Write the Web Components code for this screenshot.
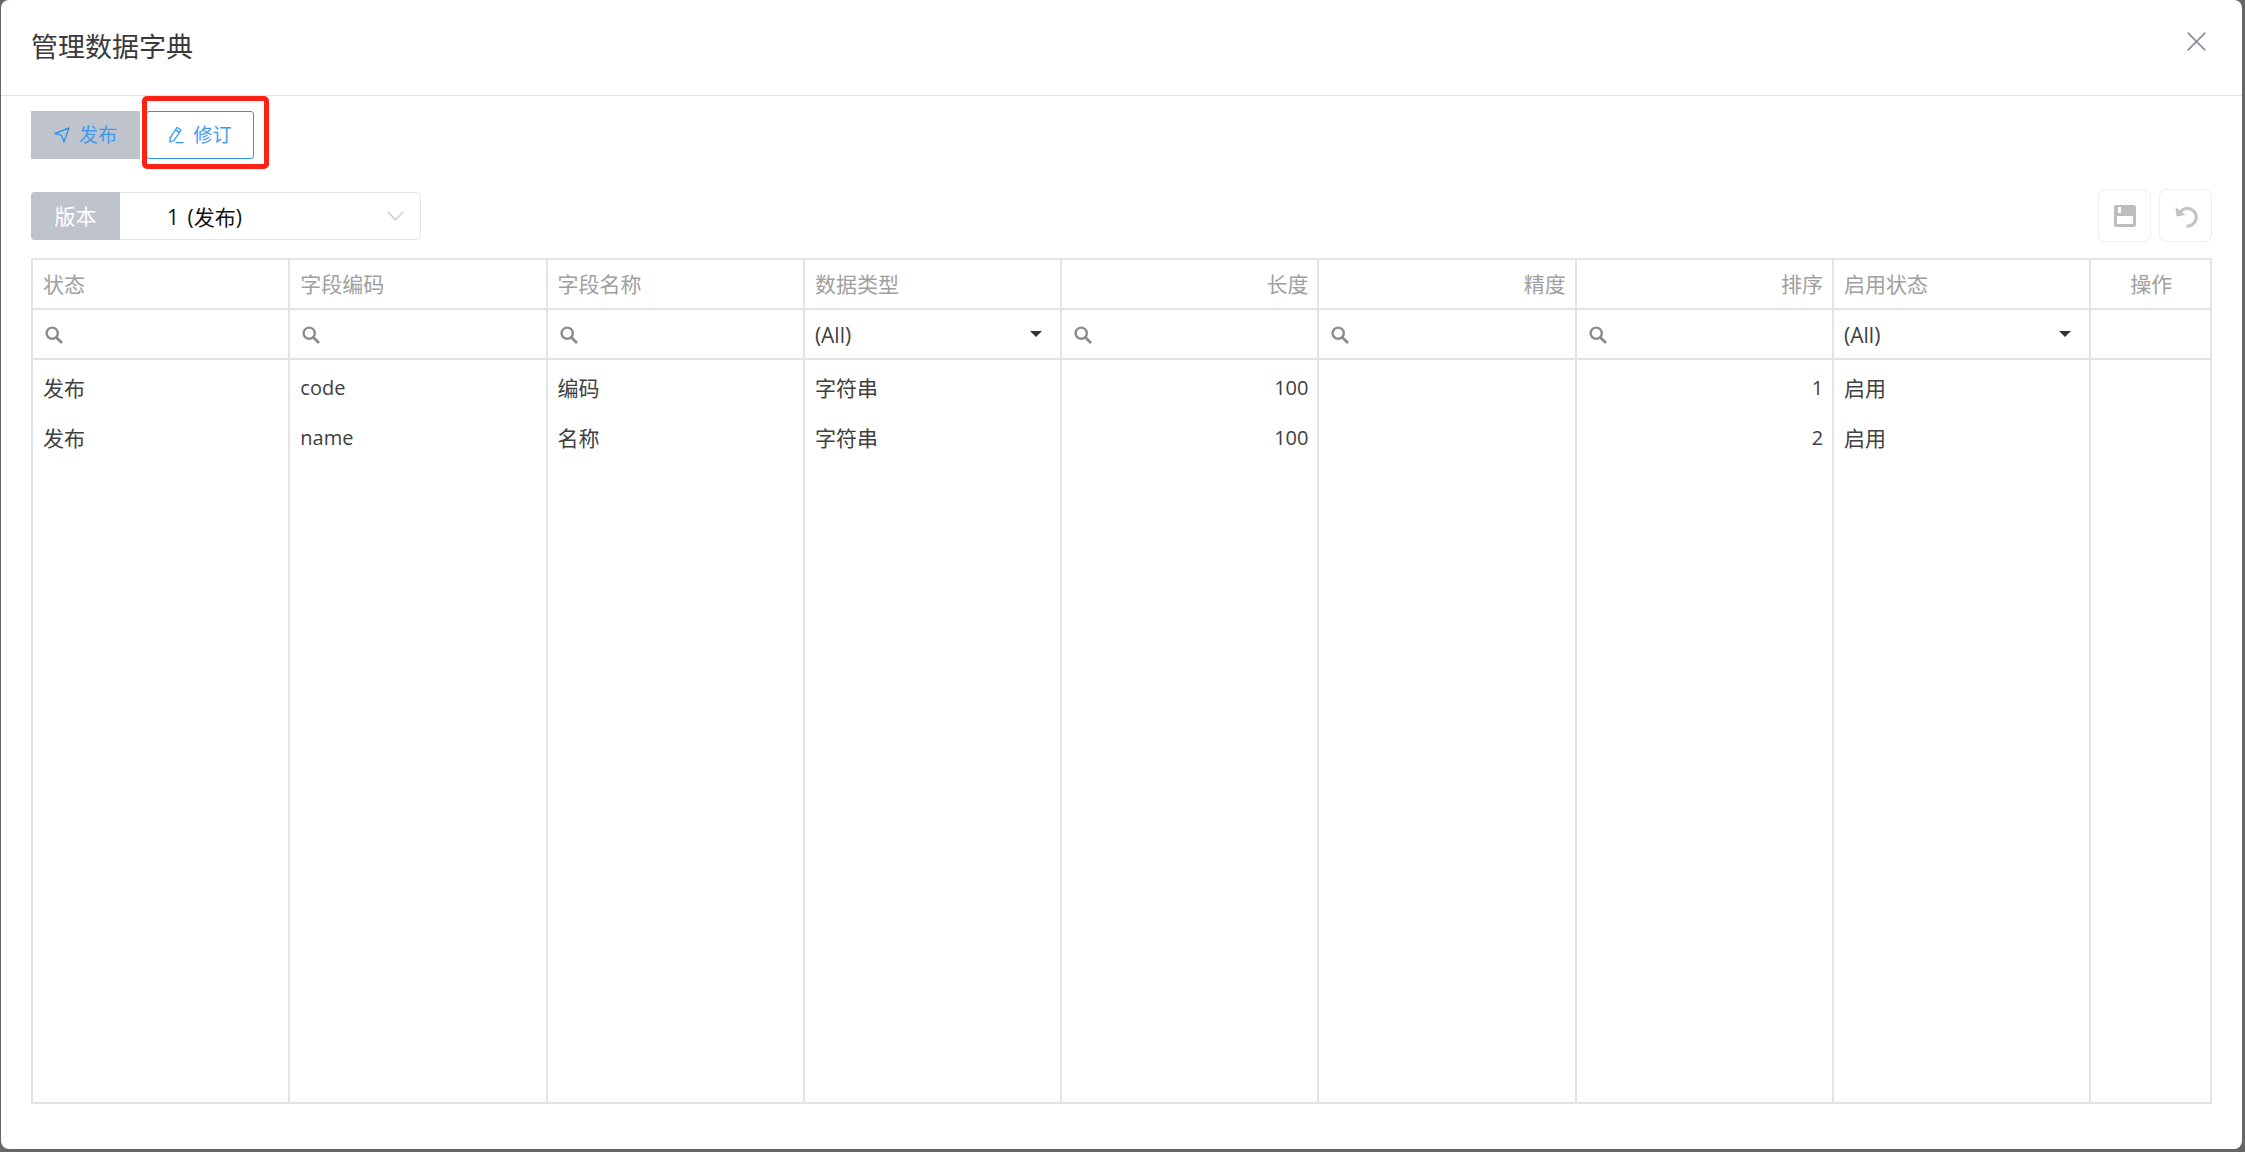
<!DOCTYPE html>
<html>
<head>
<meta charset="utf-8">
<title>管理数据字典</title>
<style>
  html, body { margin: 0; height: 100%; background: #666; overflow: hidden; }
  body { font-family: "Open Sans", "Noto Sans CJK SC", sans-serif; color: #333; }
</style>
</head>
<body>
<dict-dialog title-text="管理数据字典">
  <action-bar></action-bar>
  <version-bar></version-bar>
  <field-grid></field-grid>
</dict-dialog>

<script>
const FONT = `"Open Sans", "Noto Sans CJK SC", sans-serif`;

class DictDialog extends HTMLElement {
  constructor() {
    super();
    this.attachShadow({ mode: "open" });
  }
  connectedCallback() {
    this.shadowRoot.innerHTML = `
      <style>
        :host {
          display: flex;
          flex-direction: column;
          box-sizing: border-box;
          width: 2241px;
          height: 1149px;
          margin-left: 1px;
          background: #fff;
          border-radius: 8px;
          font-family: ${FONT};
        }
        header {
          height: 95px;
          flex: none;
          display: flex;
          align-items: center;
          justify-content: space-between;
          border-bottom: 1px solid #dfe0e3;
          padding: 0 36px 0 30px;
        }
        h1 { margin: 0 0 2px; font-size: 27px; font-weight: 400; color: #3a3a3a; line-height: 36px; }
        svg { display: block; margin-bottom: 13px; }
        main { flex: 1; min-height: 0; display: flex; flex-direction: column; padding: 15px 30px 45px 30px; }
      </style>
      <header>
        <h1>${this.getAttribute("title-text")}</h1>
        <svg width="19" height="19" viewBox="0 0 19 19"><path d="M.7.7 18.3 18.3M18.3.7.7 18.3" stroke="#8a8e99" stroke-width="1.7" fill="none"/></svg>
      </header>
      <main><slot></slot></main>
    `;
  }
}

class ActionBar extends HTMLElement {
  constructor() {
    super();
    this.attachShadow({ mode: "open" });
  }
  connectedCallback() {
    this.shadowRoot.innerHTML = `
      <style>
        :host { display: flex; gap: 6px; position: relative; height: 48px; flex: none; color: #3c9af3; font-size: 19px; }
        .btn {
          box-sizing: border-box;
          height: 48px;
          display: flex;
          align-items: center;
          justify-content: center;
          gap: 9px;
          line-height: 1;
        }
        .publish { width: 109px; background: #bfc3cc; }
        .revise { width: 108px; background: #fff; border: 1px solid #2f95f5; border-radius: 3px; }
        .mark {
          position: absolute;
          left: 111px;
          top: -15px;
          width: 127px;
          height: 73px;
          box-sizing: border-box;
          border: 5px solid #ff2214;
          border-radius: 5px;
        }
      </style>
      <div class="btn publish">
        <svg width="16" height="16" viewBox="0 0 16 16" fill="none" stroke="#2f95f5" stroke-width="1.4" stroke-linejoin="round"><path d="M15 1 1 6.5 7.6 8.4 10 15z"/></svg>
        <span>发布</span>
      </div>
      <div class="btn revise">
        <svg width="16" height="18" viewBox="0 0 16 18" fill="none" stroke="#2f95f5" stroke-width="1.3" stroke-linejoin="round"><path d="M9 1.5 13 4 6 14.5 2 16l.2-4.2z"/><path d="M7.4 3.9 11.4 6.4"/><path d="M7.5 16.6h8"/></svg>
        <span>修订</span>
      </div>
      <div class="mark"></div>
    `;
  }
}

class VersionBar extends HTMLElement {
  constructor() {
    super();
    this.attachShadow({ mode: "open" });
  }
  connectedCallback() {
    this.shadowRoot.innerHTML = `
      <style>
        :host { display: flex; justify-content: space-between; margin-top: 33px; height: 48px; flex: none; font-size: 21px; }
        .picker { display: flex; width: 390px; box-sizing: border-box; border: 1px solid #e4e5e8; border-radius: 4px; position: relative; }
        .label {
          width: 89px;
          margin: -1px 0 -1px -1px;
          padding-bottom: 2px;
          box-sizing: content-box;
          background: #bfc3cc;
          color: #fff;
          border-radius: 4px 0 0 4px;
          display: flex;
          align-items: center;
          justify-content: center;
        }
        .value { flex: 1; display: flex; align-items: center; justify-content: space-between; padding: 0 16px 0 47px; color: #111; word-spacing: 3px; }
        .tools { display: flex; gap: 8px; margin-top: -3px; }
        .tool {
          width: 53px;
          height: 53px;
          box-sizing: border-box;
          border: 1px solid #eeeeef;
          border-radius: 7px;
          display: flex;
          align-items: center;
          justify-content: center;
        }
      </style>
      <div class="picker">
        <div class="label">版本</div>
        <div class="value">
          <span>1 (发布)</span>
          <svg width="17" height="10" viewBox="0 0 17 10" fill="none" stroke="#c9ccd3" stroke-width="1.4"><path d="M.7.7 8.5 8.8 16.3.7"/></svg>
        </div>
      </div>
      <div class="tools">
        <div class="tool"><svg width="22" height="22" viewBox="0 0 22 22"><path fill-rule="evenodd" fill="#bdbdbd" d="M2 0H20a2 2 0 0 1 2 2V20a2 2 0 0 1-2 2H2a2 2 0 0 1-2-2V2A2 2 0 0 1 2 0ZM4 2V8H7V2ZM3 11V19H19V11Z"/></svg></div>
        <div class="tool"><svg width="24" height="24" viewBox="0 0 24 24" fill="none"><path d="M6 8.5A8.8 8.8 0 1 1 12.5 22" stroke="#c4c4c4" stroke-width="3.2"/><path d="M1.5 3 2.5 12.5 11.5 11z" fill="#c4c4c4"/></svg></div>
      </div>
    `;
  }
}

const COLUMNS = [
  { name: "状态", filter: "search", rows: ["发布", "发布"] },
  { name: "字段编码", filter: "search", rows: ["code", "name"], latin: true },
  { name: "字段名称", filter: "search", rows: ["编码", "名称"] },
  { name: "数据类型", filter: "select", rows: ["字符串", "字符串"] },
  { name: "长度", filter: "search", rows: ["100", "100"], align: "right", latin: true },
  { name: "精度", filter: "search", rows: ["", ""], align: "right" },
  { name: "排序", filter: "search", rows: ["1", "2"], align: "right", latin: true },
  { name: "启用状态", filter: "select", rows: ["启用", "启用"] },
  { name: "操作", filter: "", rows: ["", ""], align: "center" }
];

class FieldGrid extends HTMLElement {
  constructor() {
    super();
    this.attachShadow({ mode: "open" });
  }
  connectedCallback() {
    const searchIcon = `<svg width="18" height="18" viewBox="0 0 18 18" fill="none" stroke="#8c8c8c" stroke-width="2.4"><circle cx="7.2" cy="7.2" r="5.6"/><path d="M11.2 11.2 17 17" stroke-width="2.8"/></svg>`;
    const filter = c => {
      if (c.filter === "search") return searchIcon;
      if (c.filter === "select") return `<span>(All)</span><i class="caret"></i>`;
      return "";
    };
    const cls = (c, i) => `cell ${c.align || ""} ${i === COLUMNS.length - 1 ? "last" : ""}`;

    this.shadowRoot.innerHTML = `
      <style>
        :host {
          display: grid;
          flex: 1;
          min-height: 0;
          margin-top: 18px;
          box-sizing: border-box;
          border: 2px solid #e3e3e3;
          grid-template-columns: repeat(8, 257.3px) 1fr;
          grid-template-rows: 50px 50px 2px 50px 50px 1fr;
          font-size: 21px;
          color: #404040;
        }
        .cell {
          box-sizing: border-box;
          padding: 0 9px 0 10px;
          border-right: 2px solid #e3e3e3;
          display: flex;
          align-items: center;
          min-width: 0;
        }
        .right { justify-content: flex-end; }
        .center { justify-content: center; }
        .last { border-right: 0; }
        .latin { font-size: 20px; }
        .head { color: #a0a0a0; border-bottom: 2px solid #e3e3e3; padding-bottom: 2px; }
        .filter { border-bottom: 2px solid #e3e3e3; justify-content: space-between; padding-top: 2px; }
        .filter svg { margin: -1px 0 0 2px; }
        .gap, .fill { padding: 0; }
        .caret {
          width: 0;
          height: 0;
          border: 6px solid transparent;
          border-top: 6px solid #333;
          border-bottom: 0;
          margin: -3px 9px 0 0;
        }
      </style>
      ${COLUMNS.map((c, i) => `<div class="${cls(c, i)} head">${c.name}</div>`).join("")}
      ${COLUMNS.map((c, i) => `<div class="${cls(c, i)} filter">${filter(c)}</div>`).join("")}
      ${COLUMNS.map((c, i) => `<div class="${cls(c, i)} gap"></div>`).join("")}
      ${[0, 1].map(r => COLUMNS.map((c, i) => `<div class="${cls(c, i)} ${c.latin ? "latin" : ""}">${c.rows[r]}</div>`).join("")).join("")}
      ${COLUMNS.map((c, i) => `<div class="${cls(c, i)} fill"></div>`).join("")}
    `;
  }
}

customElements.define("dict-dialog", DictDialog);
customElements.define("action-bar", ActionBar);
customElements.define("version-bar", VersionBar);
customElements.define("field-grid", FieldGrid);
</script>
</body>
</html>
